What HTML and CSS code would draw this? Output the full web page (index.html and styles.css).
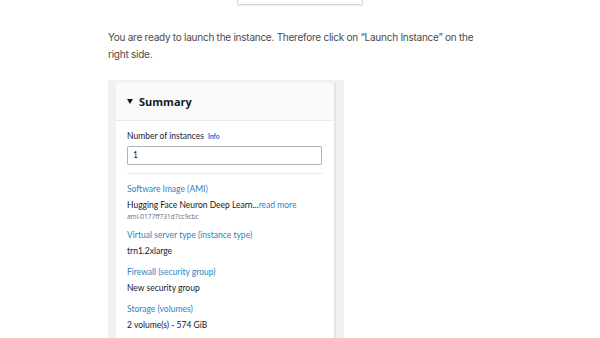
FILE: index.html
```html
<!DOCTYPE html>
<html>
<head>
<meta charset="utf-8">
<link rel="stylesheet" href="styles.css">
</head>
<body>
<div class="page">
  <div class="top-img"><div class="top-img-inner"></div></div>
  <p class="text">You are ready to launch the instance. Therefore click on “Launch Instance” on the right side.</p>
  <div class="shot">
    <div class="card">
      <div class="card-head">
        <span class="caret"></span>
        <span class="title">Summary</span>
      </div>
      <div class="card-body">
        <div class="field-label">Number of instances <span class="info">Info</span></div>
        <div class="input">1</div>
        <div class="divider"></div>
        <div class="item">
          <div class="key">Software Image (AMI)</div>
          <div class="val">Hugging Face Neuron Deep Learn...<span class="more">read more</span></div>
          <div class="sub">ami-0177ff731d7cc9cbc</div>
        </div>
        <div class="item">
          <div class="key">Virtual server type (instance type)</div>
          <div class="val">trn1.2xlarge</div>
        </div>
        <div class="item">
          <div class="key">Firewall (security group)</div>
          <div class="val">New security group</div>
        </div>
        <div class="item">
          <div class="key">Storage (volumes)</div>
          <div class="val">2 volume(s) - 574 GiB</div>
        </div>
      </div>
    </div>
  </div>
</div>
</body>
</html>
```
FILE: styles.css
```css
html, body {
  margin: 0;
  padding: 0;
  background: #ffffff;
  overflow: hidden;
}
.page {
  width: 600px;
  height: 338px;
  overflow: hidden;
}
.top-img {
  display: flex;
  justify-content: center;
  height: 6px;
}
.top-img-inner {
  width: 124px;
  height: 4px;
  border: 1px solid #d4d4d4;
  border-top: none;
  border-radius: 0 0 2px 2px;
  box-shadow: 0 1px 2px rgba(0,0,0,0.08);
  background: #fff;
}
.text {
  margin: 23px 0 0 108px;
  width: 380px;
  font-family: Inter, "Liberation Sans", sans-serif;
  font-size: 10px;
  letter-spacing: -0.25px;
  line-height: 16.5px;
  color: #4a4a4a;
}
.shot {
  margin: 18px 0 0 108px;
  width: 220px;
  padding: 3px 8px 0 8px;
  background: #f1f1f1;
  height: 300px;
}
.card {
  width: 218px;
  border-right: 2px solid #e4e4e4;
  background: #fff;
  height: 100%;
  font-family: Lato, "Open Sans", sans-serif;
}
.card-head {
  height: 37px;
  background: #fafafa;
  border-bottom: 1px solid #ebebeb;
  display: flex;
  align-items: center;
  padding-left: 11px;
}
.caret {
  width: 0;
  height: 0;
  border-left: 3.5px solid transparent;
  border-right: 3.5px solid transparent;
  border-top: 5px solid #16191f;
  margin-right: 6px;
}
.title {
  font-family: "Open Sans", sans-serif;
  font-size: 11px;
  font-weight: 700;
  color: #16191f;
}
.card-body {
  padding: 9px 11px 0 11px;
}
.field-label {
  font-size: 8.5px;
  line-height: 12px;
  color: #16191f;
}
.info {
  font-size: 6.5px;
  font-weight: 700;
  color: #0972d3;
  margin-left: 2px;
}
.input {
  margin-top: 3px;
  height: 17px;
  width: 188px;
  border: 1px solid #aab7b8;
  border-radius: 1px;
  font-size: 8.5px;
  line-height: 17px;
  padding-left: 5px;
  box-sizing: content-box;
  color: #16191f;
}
.divider {
  margin-top: 8px;
  width: 196px;
  height: 1px;
  background: #eaeded;
}
.item {
  margin-top: 9px;
}
.item + .item {
  margin-top: 8px;
}
.key {
  font-size: 8.5px;
  line-height: 13px;
  color: #2e83c6;
}
.val {
  margin-top: 3px;
  font-size: 8.5px;
  line-height: 13px;
  color: #16191f;
}
.more {
  color: #2e83c6;
}
.sub {
  font-family: "Open Sans", sans-serif;
  font-size: 6.5px;
  line-height: 9px;
  color: #5f6b7a;
}
```
